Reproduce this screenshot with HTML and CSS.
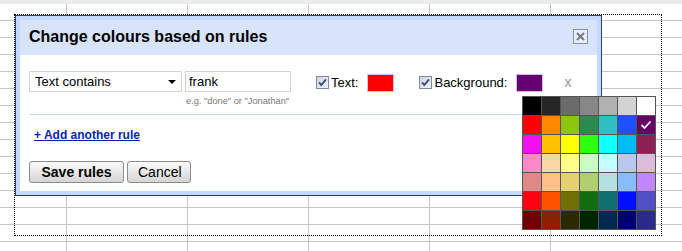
FILE: index.html
```html
<!DOCTYPE html>
<html>
<head>
<meta charset="utf-8">
<link rel="stylesheet" href="styles.css">
</head>
<body>
<div class="sheet">
  <div class="selection"></div>
  <div class="dialog">
    <div class="titlebar">
      <span class="title">Change colours based on rules</span>
      <svg class="close" width="15" height="15" viewBox="0 0 15 15"><rect x="0.5" y="0.5" width="14" height="14" fill="#e6eefc" stroke="#8a8f99"/><path d="M4 4 L11 11 M11 4 L4 11" stroke="#757a84" stroke-width="2"/></svg>
    </div>
    <div class="content">
      <div class="rule">
        <div class="select"><span>Text contains</span><i class="arrow"></i></div>
        <div class="field">
          <div class="input">frank</div>
          <div class="hint">e.g. "done" or "Jonathan"</div>
        </div>
        <label class="opt first">
          <svg class="cb" width="13" height="13" viewBox="0 0 13 13"><defs><linearGradient id="g" x1="0" y1="0" x2="1" y2="1"><stop offset="0" stop-color="#cfd3dc"/><stop offset="1" stop-color="#f4f5f8"/></linearGradient></defs><rect x="0.5" y="0.5" width="12" height="12" fill="url(#g)" stroke="#7d8aa3"/><path d="M3 6.3 L5.3 9 L10 3.3" stroke="#3c4c7c" stroke-width="1.9" fill="none"/></svg>
          <span>Text:</span>
          <span class="swatch red"></span>
        </label>
        <label class="opt">
          <svg class="cb" width="13" height="13" viewBox="0 0 13 13"><rect x="0.5" y="0.5" width="12" height="12" fill="url(#g)" stroke="#7d8aa3"/><path d="M3 6.3 L5.3 9 L10 3.3" stroke="#3c4c7c" stroke-width="1.9" fill="none"/></svg>
          <span>Background:</span>
          <span class="swatch purple"></span>
        </label>
        <span class="remove">x</span>
      </div>
      <a class="add" href="#">+ Add another rule</a>
      <div class="buttons">
        <button class="btn save">Save rules</button>
        <button class="btn">Cancel</button>
      </div>
    </div>
  </div>
  <div class="palette">
    <span style="background:#000000"></span><span style="background:#262626"></span><span style="background:#6b6b6b"></span><span style="background:#878787"></span><span style="background:#b1b1b1"></span><span style="background:#d3d3d3"></span><span style="background:#ffffff"></span>
    <span style="background:#ff0000"></span><span style="background:#ff8800"></span><span style="background:#8cc60e"></span><span style="background:#2b8a50"></span><span style="background:#2ec0c0"></span><span style="background:#1e50ff"></span><span class="sel" style="background:#660066"><svg width="12" height="10" viewBox="0 0 12 10"><path d="M1.5 5 L4.5 8 L10.5 1.5" stroke="#fff" stroke-width="1.8" fill="none"/></svg></span>
    <span style="background:#f010f0"></span><span style="background:#ffc000"></span><span style="background:#ffff00"></span><span style="background:#30ff10"></span><span style="background:#10ffff"></span><span style="background:#00bcf4"></span><span style="background:#8c2055"></span>
    <span style="background:#ff88c8"></span><span style="background:#fad6a6"></span><span style="background:#ffff88"></span><span style="background:#c8ffc0"></span><span style="background:#c4ffff"></span><span style="background:#b8c8f0"></span><span style="background:#dcbcdc"></span>
    <span style="background:#e08888"></span><span style="background:#ffc088"></span><span style="background:#e4d070"></span><span style="background:#b0d070"></span><span style="background:#b4e0e0"></span><span style="background:#88bcff"></span><span style="background:#c088ff"></span>
    <span style="background:#ff0010"></span><span style="background:#ff5000"></span><span style="background:#707000"></span><span style="background:#106e10"></span><span style="background:#107070"></span><span style="background:#0010ff"></span><span style="background:#5050c4"></span>
    <span style="background:#700000"></span><span style="background:#8a2200"></span><span style="background:#2a2a00"></span><span style="background:#002400"></span><span style="background:#002850"></span><span style="background:#000070"></span><span style="background:#2a2a8a"></span>
  </div>
</div>
</body>
</html>
```
FILE: styles.css
```css
html, body {
  margin: 0;
  padding: 0;
  background: #fff;
  font-family: "Liberation Sans", Arial, sans-serif;
}
.sheet {
  position: relative;
  width: 682px;
  height: 251px;
  overflow: hidden;
  background-color: #fff;
  background-image:
    linear-gradient(to bottom, #ebebeb 0 4px, transparent 4px),
    repeating-linear-gradient(to right, transparent 0 120px, #c6c6c6 120px 121px),
    repeating-linear-gradient(to bottom, transparent 0 16px, #c6c6c6 16px 17px);
  background-position: 0 0, -54px 0, 0 4px;
  background-repeat: no-repeat, repeat, repeat-x;
  background-size: 100% 100%, auto, 100% 100%;
}
.selection {
  position: absolute;
  left: 14px;
  top: 14px;
  width: 646px;
  height: 220px;
  border: 1px dotted #000;
}
.dialog {
  position: absolute;
  left: 15px;
  top: 15px;
  width: 577px;
  border: 1px solid #2c3f66;
  background: #fff;
  box-shadow: inset 0 0 0 4px #c3d9ff;
  padding: 4px;
}
.titlebar {
  height: 35px;
  background: #d7e4fc;
  display: flex;
  align-items: flex-start;
  justify-content: space-between;
}
.title {
  font-weight: bold;
  font-size: 16px;
  line-height: 33px;
  color: #000;
  margin-left: 9px;
}
.close {
  display: block;
  margin-top: 9px;
  margin-right: 9px;
}
.content {
  padding: 16px 8px 8px 9px;
}
.rule {
  display: flex;
  align-items: flex-start;
  height: 43px;
  border-bottom: 1px solid #c3d9ff;
  font-size: 13px;
  color: #000;
}
.select {
  box-sizing: border-box;
  width: 153px;
  height: 21px;
  border: 1px solid #d4d4d4;
  display: flex;
  align-items: center;
  justify-content: space-between;
  padding: 0 5px 0 5px;
  line-height: 19px;
}
.arrow {
  width: 0;
  height: 0;
  border-left: 4px solid transparent;
  border-right: 4px solid transparent;
  border-top: 4px solid #000;
  margin-top: 1px;
}
.field {
  margin-left: 3px;
  width: 106px;
}
.input {
  box-sizing: border-box;
  height: 21px;
  border: 1px solid #d4d4d4;
  padding: 0 3px;
  line-height: 19px;
}
.hint {
  font-size: 9.25px;
  color: #777;
  margin-top: 4px;
  padding-left: 1px;
  white-space: nowrap;
}
.opt {
  display: flex;
  align-items: center;
  margin-left: 25px;
  height: 21px;
  margin-top: 1px;
}
.opt.first {
  margin-left: 25px;
}
.cb {
  display: block;
  margin-right: 2px;
}
.swatch {
  width: 25px;
  height: 16px;
  border: 1px solid #cbc3e6;
  margin-left: 9px;
}
.red { background: #ff0000; }
.purple { background: #660070; margin-left: 9px; }
.remove {
  color: #999;
  font-size: 14px;
  margin-left: 21px;
  line-height: 21px;
  margin-top: 1px;
}
.add {
  display: inline-block;
  margin-top: 13px;
  margin-left: 5px;
  font-size: 12px;
  font-weight: bold;
  color: #0b1fad;
  text-decoration: underline;
  line-height: 14px;
}
.buttons {
  display: flex;
  gap: 3px;
  margin-top: 18px;
}
.btn {
  box-sizing: border-box;
  height: 22px;
  padding: 0 10px;
  font-family: "Liberation Sans", Arial, sans-serif;
  font-size: 14px;
  color: #000;
  border: 1px solid #8c8c8c;
  border-radius: 3px;
  background: linear-gradient(to bottom, #fbfbfb 0%, #e6e6e6 55%, #d4d4d4 100%);
  line-height: 20px;
}
.save {
  width: 95px;
  font-weight: bold;
}
.btn:not(.save) {
  width: 64px;
}
.palette {
  position: absolute;
  left: 522px;
  top: 96px;
  display: grid;
  grid-template-columns: repeat(7, 18px);
  grid-auto-rows: 18px;
  gap: 1px;
  padding: 1px;
  background: #555;
}
.palette span {
  display: block;
}
.palette .sel {
  display: flex;
  align-items: center;
  justify-content: center;
}
```
